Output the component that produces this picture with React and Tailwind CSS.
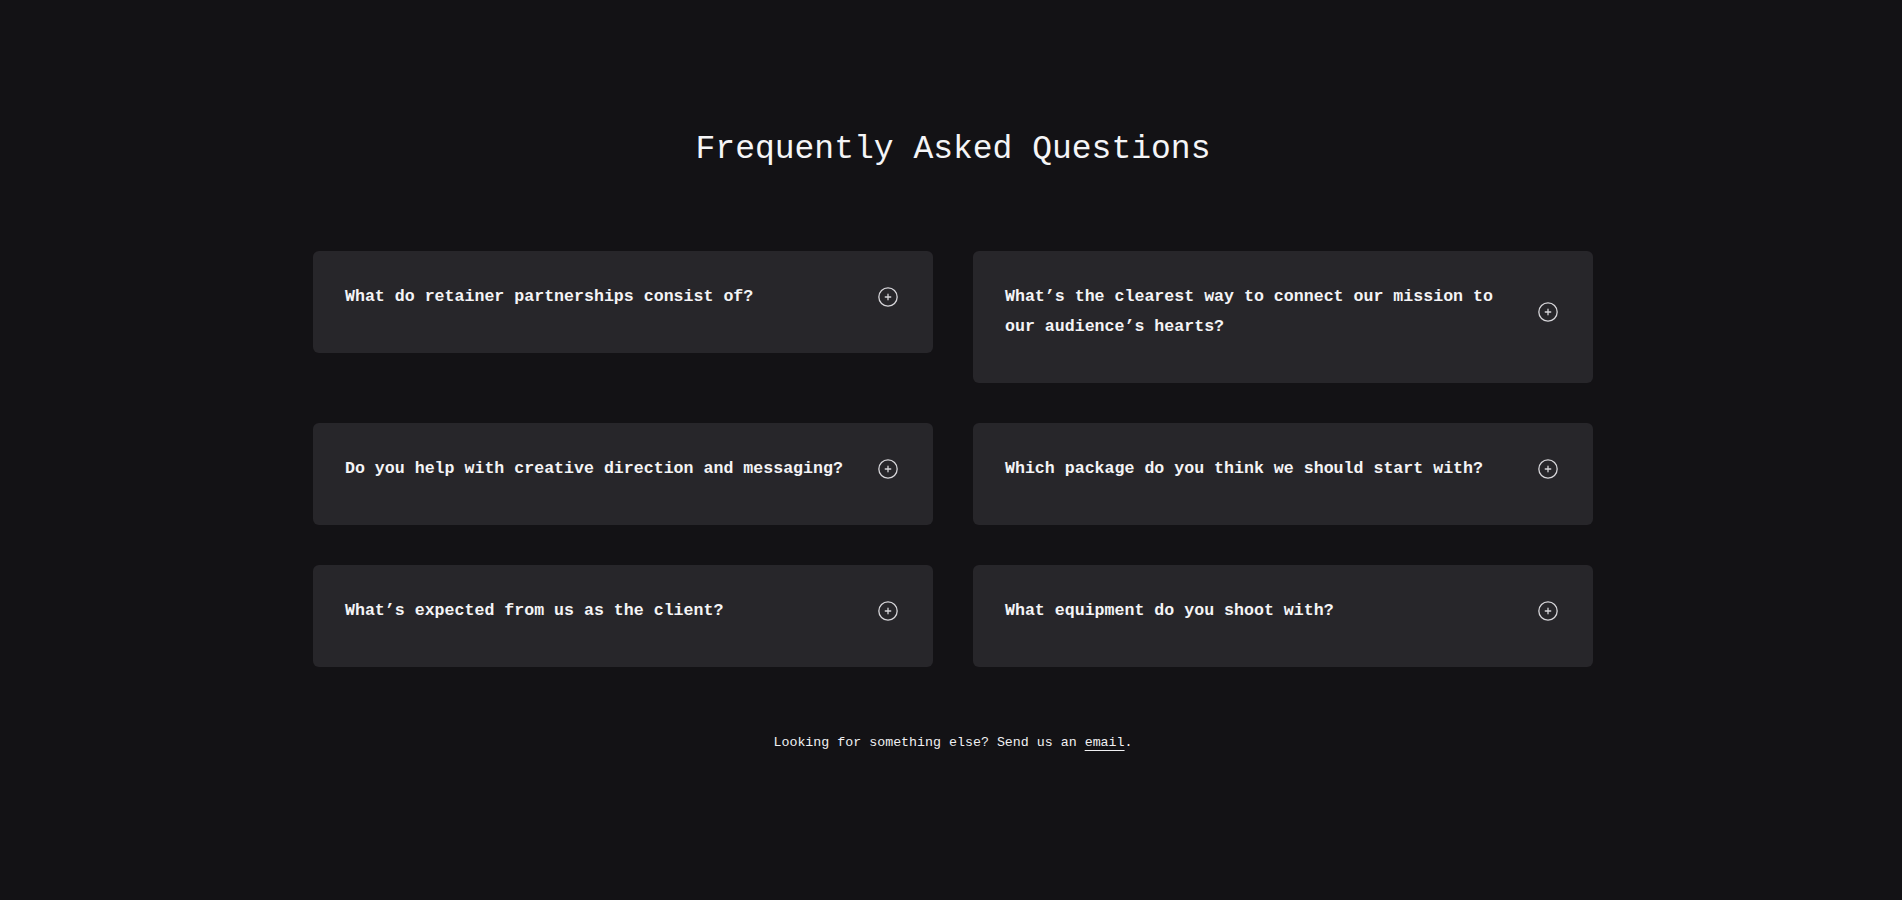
import React from "react";

const faqs = [
  "What do retainer partnerships consist of?",
  "What\u2019s the clearest way to connect our mission to our audience\u2019s hearts?",
  "Do you help with creative direction and messaging?",
  "Which package do you think we should start with?",
  "What\u2019s expected from us as the client?",
  "What equipment do you shoot with?",
];

function PlusCircle() {
  return (
    <svg width="22" height="22" viewBox="0 0 24 24" fill="none" stroke="#d6d5d9" strokeWidth="1.4" strokeLinecap="round" className="shrink-0">
      <circle cx="12" cy="12" r="10" />
      <path d="M12 9v6M9 12h6" />
    </svg>
  );
}

export default function App() {
  return (
    <div className="min-h-[900px] w-full bg-[#131215] pl-[4px] text-white" style={{ fontFamily: '"Liberation Mono", "DejaVu Sans Mono", monospace' }}>
      <div className="mx-auto w-[1280px] pt-[130px]">
        <h2 className="text-center text-[33px] leading-[40px] font-normal text-[#f5f5f7]">Frequently Asked Questions</h2>
        <div className="mt-[81px] grid grid-cols-2 items-start gap-x-[40px] gap-y-[40px]">
          {faqs.map((q) => (
            <div key={q} className="flex items-center justify-between gap-[30px] rounded-md bg-[#27262a] pt-[31px] pb-[41px] pl-8 pr-[34px]">
              <span className="text-[16.6px] leading-[30px] font-bold text-[#f4f4f6]">{q}</span>
              <PlusCircle />
            </div>
          ))}
        </div>
        <p className="mt-[66px] text-center text-[13.3px] leading-[20px] text-[#f0f0f2]">
          Looking for something else? Send us an <a className="underline underline-offset-4" href="#">email</a>.
        </p>
      </div>
    </div>
  );
}
